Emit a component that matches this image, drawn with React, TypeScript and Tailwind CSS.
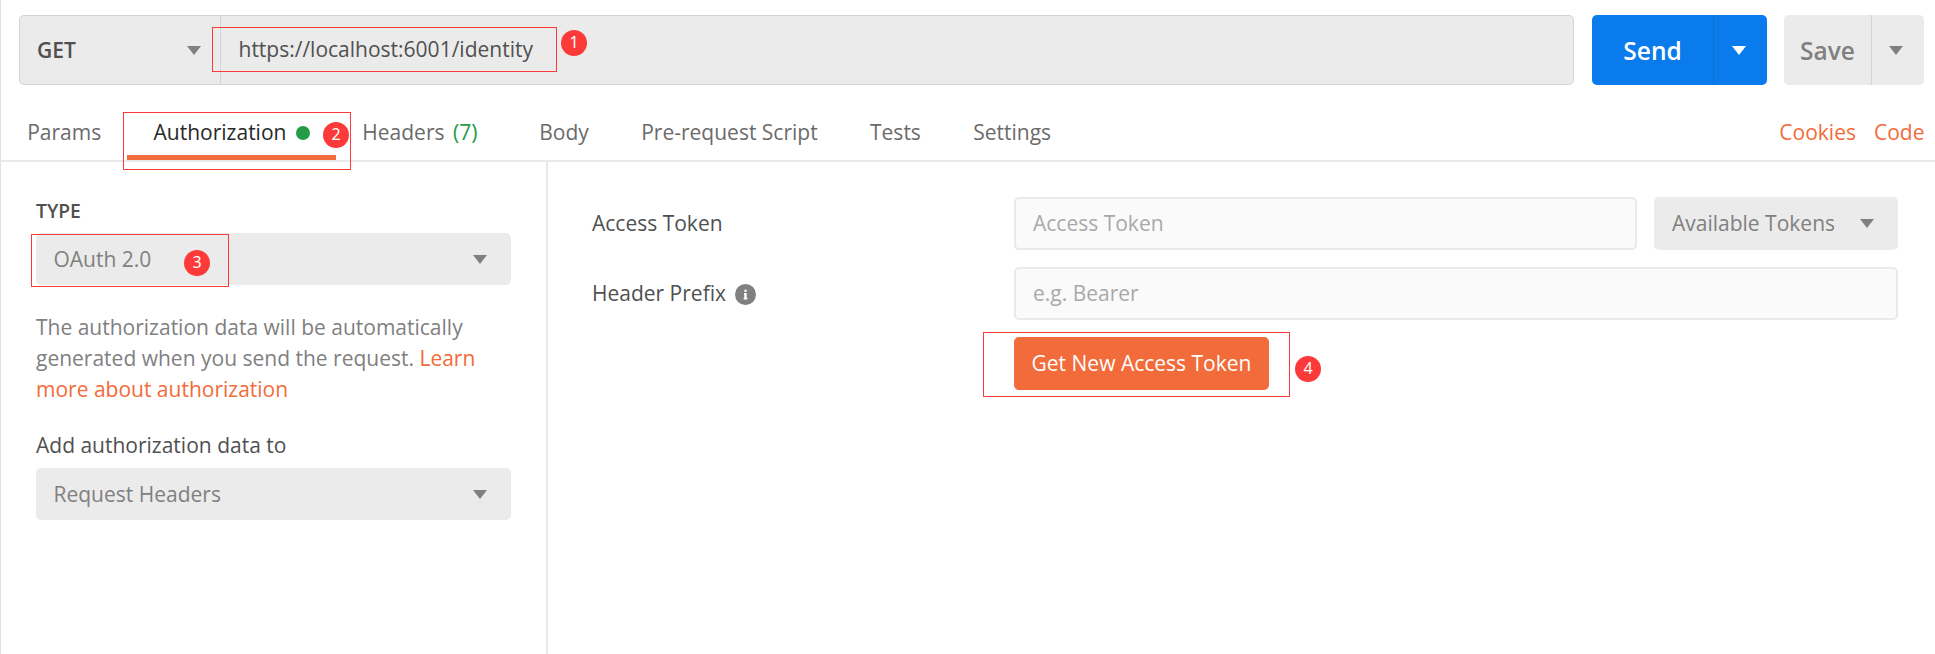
import React from 'react';

function Caret({ className = 'text-[#808080]' }: { className?: string }) {
  return (
    <svg viewBox="0 0 14 9" className={`h-[9px] w-[14px] shrink-0 ${className}`}>
      <path d="M0 0h14L7 9z" fill="currentColor" />
    </svg>
  );
}

function Badge({ n, className }: { n: number; className: string }) {
  return (
    <div
      className={`absolute flex h-[26px] w-[26px] items-center justify-center rounded-full bg-[#fc3a3a] pb-[3px] font-['Noto_Sans',sans-serif] text-[16px] leading-none text-white ${className}`}
    >
      {n}
    </div>
  );
}

function Outline({ className }: { className: string }) {
  return <div className={`pointer-events-none absolute border border-[#fc3a3a] ${className}`} />;
}

function Tab({ children, active = false }: { children: React.ReactNode; active?: boolean }) {
  return (
    <div
      className={`flex h-full items-center border-b-[5px] px-[26.2px] pt-[6px] whitespace-nowrap ${
        active ? 'border-[#f26b3a] text-[#282828]' : 'border-transparent text-[#6b6b6b]'
      }`}
    >
      {children}
    </div>
  );
}

function Select({ label }: { label: string }) {
  return (
    <div className="flex h-[52px] items-center justify-between rounded-[5px] bg-[#ebebeb] pr-[24px] pl-[17.5px] text-[#808080]">
      <span>{label}</span>
      <Caret />
    </div>
  );
}

function Field({ placeholder }: { placeholder: string }) {
  return (
    <div className="flex h-[53px] flex-1 items-center rounded-[5px] border-2 border-[#eaeaea] bg-[#fafafa] pl-[17px] text-[#a9a9a9]">
      {placeholder}
    </div>
  );
}

export default function App() {
  return (
    <div className="relative flex h-[654px] w-[1935px] flex-col overflow-hidden border-l border-[#e2e2e2] bg-white font-['Open_Sans',sans-serif] text-[21px] leading-[31px] text-[#505050]">
      <header className="flex h-[85px] shrink-0 pt-[15px] pr-[11px] pl-[18px]">
        <div className="flex w-[1555px] rounded-[5px] border border-[#d4d4d4] bg-[#ebebeb]">
          <div className="flex w-[201px] items-center justify-between border-r border-[#d4d4d4] pr-[19px] pl-[17px]">
            <span className="font-semibold">GET</span>
            <Caret />
          </div>
          <div className="flex items-center pb-px pl-[17.5px]">https://localhost:6001/identity</div>
        </div>
        <div className="ml-[18px] flex w-[175px] rounded-[5px] bg-[#097bed] text-[24.5px] font-semibold text-white">
          <div className="flex w-[122px] items-center justify-center border-r border-[#0b6fd3]">Send</div>
          <div className="flex flex-1 items-center justify-center pr-[3px]">
            <Caret className="text-white" />
          </div>
        </div>
        <div className="ml-[17px] flex w-[140px] rounded-[5px] bg-[#ebebeb] text-[24.5px] font-semibold text-[#808080]">
          <div className="flex w-[88px] items-center justify-center border-r border-[#d4d4d4]">Save</div>
          <div className="flex flex-1 items-center justify-center pr-[4px]">
            <Caret />
          </div>
        </div>
      </header>

      <nav className="flex h-[77px] shrink-0 items-end justify-between border-b-2 border-[#eaeaea] pr-[10.5px]">
        <div className="flex h-[56px]">
          <Tab>Params</Tab>
          <Tab active>
            Authorization
            <span className="ml-[9.5px] h-[14px] w-[14px] rounded-full bg-[#249c47]" />
          </Tab>
          <Tab>
            Headers
            <span className="mr-[9.5px] ml-[8.5px] text-[#249c47]">(7)</span>
          </Tab>
          <Tab>Body</Tab>
          <Tab>Pre-request Script</Tab>
          <Tab>Tests</Tab>
          <Tab>Settings</Tab>
        </div>
        <div className="flex h-[56px] items-center gap-[18px] pt-[6px] pb-[5px] text-[#f26b3a]">
          <span>Cookies</span>
          <span>Code</span>
        </div>
      </nav>

      <main className="flex flex-1">
        <aside className="flex w-[547px] flex-col border-r-2 border-[#eaeaea] pr-[35px] pl-[35px]">
          <div className="mt-[33px] mb-[7px] text-[19.25px] font-semibold">TYPE</div>
          <Select label="OAuth 2.0" />
          <p className="mt-[27px] text-[#808080]">
            The authorization data will be automatically generated when you send the request.{' '}
            <span className="text-[#f26b3a]">Learn more about authorization</span>
          </p>
          <div className="mt-[25px] mb-[7px]">Add authorization data to</div>
          <Select label="Request Headers" />
        </aside>

        <section className="flex flex-1 flex-col gap-[17px] pt-[35px] pr-[37px] pl-[44px]">
          <div className="flex items-center">
            <div className="w-[422px]">Access Token</div>
            <div className="flex flex-1 gap-[17px]">
              <Field placeholder="Access Token" />
              <div className="flex w-[244px] items-center justify-between rounded-[5px] bg-[#ebebeb] pr-[24px] pl-[18px] text-[#808080]">
                <span>Available Tokens</span>
                <Caret />
              </div>
            </div>
          </div>
          <div className="flex items-center">
            <div className="flex w-[422px] items-center gap-[9px]">
              Header Prefix
              <svg viewBox="0 0 21 21" className="mt-[2px] h-[21px] w-[21px]">
                <circle cx="10.5" cy="10.5" r="10.5" fill="#808080" />
                <path d="M9.3 5.8h2.4v2H9.3zM9 9h2.7v4.8h.6v1.6H8.7v-1.6h.6v-3.3H9z" fill="#fff" />
              </svg>
            </div>
            <Field placeholder="e.g. Bearer" />
          </div>
          <div className="ml-[422px] flex h-[53px] w-[255px] items-center justify-center rounded-[5px] bg-[#f26b3a] font-medium text-white">
            Get New Access Token
          </div>
        </section>
      </main>

      <Outline className="top-[27px] left-[211px] h-[45px] w-[345px]" />
      <Badge n={1} className="top-[30px] left-[560px]" />
      <Outline className="top-[112px] left-[122px] h-[58px] w-[228px]" />
      <Badge n={2} className="top-[122px] left-[322px]" />
      <Outline className="top-[234px] left-[30px] h-[53px] w-[198px]" />
      <Badge n={3} className="top-[250px] left-[183px]" />
      <Outline className="top-[332px] left-[982px] h-[65px] w-[307px]" />
      <Badge n={4} className="top-[356px] left-[1294px]" />
    </div>
  );
}
